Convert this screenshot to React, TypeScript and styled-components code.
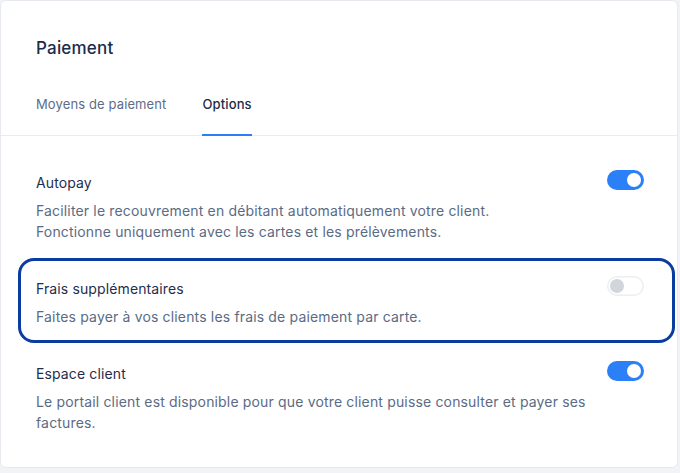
import React, { useState } from "react";
import styled, { createGlobalStyle } from "styled-components";

const Global = createGlobalStyle`
  html, body { margin: 0; padding: 0; background: #f1f3f6; }
  body { font-family: Inter, "Noto Sans", sans-serif; -webkit-font-smoothing: antialiased; }
  * { box-sizing: border-box; }
`;

const Page = styled.div`
  width: 680px;
  height: 473px;
  padding: 0 2px 5px 0;
`;

const Card = styled.section`
  width: 678px;
  height: 468px;
  background: #ffffff;
  border: 1px solid #e6e9ed;
  border-radius: 6px;
  display: flex;
  flex-direction: column;
`;

const Header = styled.header`
  padding: 35px 35px 0;
  border-bottom: 1px solid #e8ebef;
`;

const Title = styled.h1`
  margin: 0;
  font-size: 17px;
  line-height: 24px;
  font-weight: 500;
  letter-spacing: 0.2px;
  color: #1b2b4b;
`;

const Tabs = styled.nav`
  display: flex;
  gap: 36px;
  margin-top: 34px;
`;

const Tab = styled.button<{ $active?: boolean }>`
  all: unset;
  box-sizing: border-box;
  cursor: pointer;
  font-family: Inter, "Noto Sans", sans-serif;
  font-size: 13px;
  line-height: 20px;
  letter-spacing: 0.12px;
  font-weight: ${(p) => (p.$active ? 500 : 400)};
  color: ${(p) => (p.$active ? "#1b2b4b" : "#5d6d88")};
  padding-bottom: 20px;
  margin-bottom: -1px;
  border-bottom: 2px solid ${(p) => (p.$active ? "#2c7df7" : "transparent")};
`;

const Body = styled.div`
  padding: 37px 33px 0 35px;
  display: flex;
  flex-direction: column;
  gap: 37px;
`;

const Row = styled.div`
  position: relative;
  display: flex;
  align-items: flex-start;
  gap: 16px;
`;

const Texts = styled.div`
  flex: 1;
  min-width: 0;
`;

const RowTitle = styled.div`
  font-size: 14px;
  line-height: 20px;
  letter-spacing: 0.12px;
  color: #1f2e4e;
  margin-bottom: 7px;
`;

const RowDesc = styled.p`
  margin: 0;
  font-size: 14px;
  line-height: 21px;
  letter-spacing: 0.16px;
  color: #5b6b84;
`;

const Highlight = styled.div`
  position: absolute;
  left: -18px;
  right: -31px;
  top: -21px;
  bottom: -16px;
  border: 3px solid #0a3d9f;
  border-radius: 16px;
  pointer-events: none;
`;

const Switch = styled.button<{ $on: boolean }>`
  all: unset;
  box-sizing: border-box;
  cursor: pointer;
  flex: none;
  width: 37px;
  height: 20px;
  margin-top: -3px;
  border-radius: 10px;
  display: flex;
  align-items: center;
  padding: 0 3px;
  justify-content: ${(p) => (p.$on ? "flex-end" : "flex-start")};
  background: ${(p) => (p.$on ? "#2b7ff7" : "#ffffff")};
  box-shadow: ${(p) => (p.$on ? "none" : "inset 0 0 0 1.5px #eceef2")};
`;

const Knob = styled.span<{ $on: boolean }>`
  width: 14px;
  height: 14px;
  border-radius: 50%;
  background: ${(p) => (p.$on ? "#ffffff" : "#d1d5dc")};
`;

type Opt = { title: string; desc: string[]; on: boolean; highlight?: boolean };

const options: Opt[] = [
  {
    title: "Autopay",
    desc: [
      "Faciliter le recouvrement en débitant automatiquement votre client.",
      "Fonctionne uniquement avec les cartes et les prélèvements.",
    ],
    on: true,
  },
  {
    title: "Frais supplémentaires",
    desc: ["Faites payer à vos clients les frais de paiement par carte."],
    on: false,
    highlight: true,
  },
  {
    title: "Espace client",
    desc: [
      "Le portail client est disponible pour que votre client puisse consulter et payer ses factures.",
    ],
    on: true,
  },
];

export default function App() {
  const [state, setState] = useState(options.map((o) => o.on));
  return (
    <Page>
      <Global />
      <Card>
        <Header>
          <Title>Paiement</Title>
          <Tabs>
            <Tab>Moyens de paiement</Tab>
            <Tab $active>Options</Tab>
          </Tabs>
        </Header>
        <Body>
          {options.map((o, i) => (
            <Row key={o.title}>
              {o.highlight && <Highlight />}
              <Texts>
                <RowTitle>{o.title}</RowTitle>
                {o.desc.map((d) => (
                  <RowDesc key={d}>{d}</RowDesc>
                ))}
              </Texts>
              <Switch
                $on={state[i]}
                onClick={() => setState((s) => s.map((v, j) => (j === i ? !v : v)))}
              >
                <Knob $on={state[i]} />
              </Switch>
            </Row>
          ))}
        </Body>
      </Card>
    </Page>
  );
}
